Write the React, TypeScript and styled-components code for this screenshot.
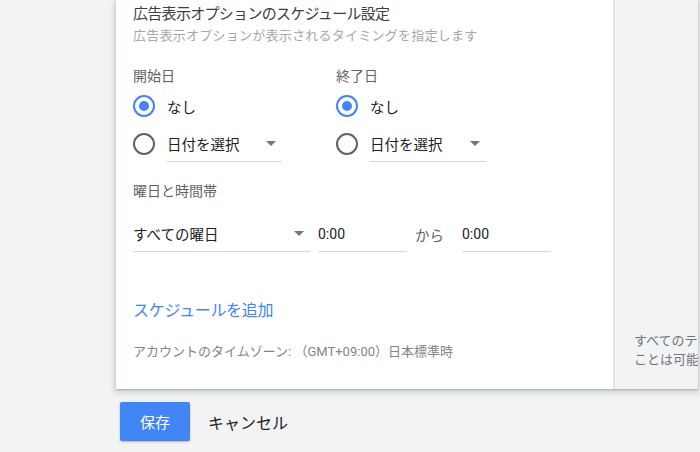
import { FC, JSX } from 'react';
import styled, { createGlobalStyle } from 'styled-components';

const GlobalStyle = createGlobalStyle`
  html, body {
    margin: 0;
    padding: 0;
    background: #f1f3f4;
    font-family: Roboto, "Noto Sans CJK JP", sans-serif;
    overflow: hidden;
  }
`;

const Page = styled.div`
  width: 700px;
  height: 452px;
  padding-left: 116px;
  box-sizing: border-box;
`;

const Card = styled.section`
  width: 582px;
  height: 389px;
  display: flex;
  background: #fff;
  box-shadow: 0 1px 2px rgba(60, 64, 67, 0.3), 0 2px 6px 2px rgba(60, 64, 67, 0.15);
`;

const Main = styled.div`
  width: 499px;
  padding: 4px 0 0 17px;
  box-sizing: border-box;
  display: flex;
  flex-direction: column;
  border-right: 2px solid #e3e4e6;
`;

const Side = styled.aside`
  flex: 1;
  min-width: 0;
  background: #f1f3f4;
  overflow: hidden;
  display: flex;
  flex-direction: column;
  justify-content: flex-end;
  padding: 0 0 20px 19px;
  font-size: 13px;
  line-height: 19px;
  color: #70757a;
  white-space: nowrap;
`;

const Title = styled.h2`
  margin: 0;
  font-size: 15px;
  font-weight: 400;
  line-height: 20px;
  letter-spacing: -0.7px;
  color: #3c4043;
`;

const Subtitle = styled.p`
  margin: 2px 0 0;
  font-size: 13px;
  line-height: 20px;
  letter-spacing: 0.25px;
  color: #a4a8ad;
`;

const DateRow = styled.div`
  display: grid;
  grid-template-columns: 203px 1fr;
  margin-top: 20px;
`;

const Column = styled.div`
  display: flex;
  flex-direction: column;
`;

const Label = styled.div<{ $top?: number }>`
  margin-top: ${p => p.$top ?? 0}px;
  font-size: 14px;
  line-height: 20px;
  color: #5f6368;
`;

const Options = styled.div`
  display: flex;
  flex-direction: column;
  gap: 2px;
  margin-top: 2px;
`;

const Option = styled.label`
  display: flex;
  align-items: center;
  height: 36px;
  gap: 12px;
  font-size: 14.5px;
  color: #202124;
`;

const Radio = styled.span<{ $checked?: boolean }>`
  width: 22px;
  height: 22px;
  flex: none;
  box-sizing: border-box;
  border-radius: 50%;
  border: 2px solid ${p => (p.$checked ? '#4285f4' : '#5f6368')};
  display: flex;
  align-items: center;
  justify-content: center;

  &::after {
    content: '';
    width: 10px;
    height: 10px;
    border-radius: 50%;
    background: #4285f4;
    display: ${p => (p.$checked ? 'block' : 'none')};
  }
`;

const Select = styled.div<{ $width: number }>`
  width: ${p => p.$width}px;
  height: 36px;
  box-sizing: border-box;
  display: flex;
  align-items: center;
  justify-content: space-between;
  padding-right: 6px;
  border-bottom: 1px solid #d8d9db;
  font-size: 14.5px;
  color: #202124;
`;

const Arrow = styled.span`
  width: 0;
  height: 0;
  border-left: 5px solid transparent;
  border-right: 5px solid transparent;
  border-top: 5px solid #757575;
`;

const TimeRow = styled.div`
  display: flex;
  align-items: center;
  margin-top: 15px;
`;

const TimeInput = styled.div`
  width: 89px;
  height: 35px;
  box-sizing: border-box;
  margin-left: 8px;
  display: flex;
  align-items: center;
  border-bottom: 1px solid #d8d9db;
  font-size: 14px;
  color: #202124;
`;

const Joiner = styled.span`
  margin: 0 10px 0 8px;
  font-size: 14.5px;
  color: #5f6368;
`;

const AddLink = styled.a`
  margin-top: 48px;
  font-size: 16px;
  line-height: 22px;
  letter-spacing: -0.3px;
  color: #4285f4;
  cursor: pointer;
`;

const Note = styled.p`
  margin: 20px 0 0;
  font-size: 13px;
  line-height: 20px;
  color: #80868b;
`;

const Actions = styled.div`
  display: flex;
  align-items: center;
  margin-top: 13px;
  padding-left: 4px;
`;

const SaveButton = styled.button`
  width: 70px;
  height: 39px;
  border: none;
  border-radius: 2px;
  background: #4285f4;
  color: #fff;
  font: inherit;
  font-size: 15px;
  box-shadow: 0 1px 2px rgba(0, 0, 0, 0.25);
`;

const CancelButton = styled.button`
  margin-left: 2px;
  padding: 0 16px;
  height: 39px;
  border: none;
  background: transparent;
  font: inherit;
  font-size: 16px;
  color: #202124;
`;

const DateColumn: FC<{ label: string; selectWidth: number }> = ({ label, selectWidth }): JSX.Element => (
  <Column>
    <Label>{label}</Label>
    <Options>
      <Option>
        <Radio $checked />
        なし
      </Option>
      <Option>
        <Radio />
        <Select $width={selectWidth}>
          日付を選択
          <Arrow />
        </Select>
      </Option>
    </Options>
  </Column>
);

const App: FC = (): JSX.Element => (
  <>
    <GlobalStyle />
    <Page>
      <Card>
        <Main>
          <Title>広告表示オプションのスケジュール設定</Title>
          <Subtitle>広告表示オプションが表示されるタイミングを指定します</Subtitle>
          <DateRow>
            <DateColumn label={'開始日'} selectWidth={115} />
            <DateColumn label={'終了日'} selectWidth={116} />
          </DateRow>
          <Label $top={19}>曜日と時間帯</Label>
          <TimeRow>
            <Select $width={177}>
              すべての曜日
              <Arrow />
            </Select>
            <TimeInput>0:00</TimeInput>
            <Joiner>から</Joiner>
            <TimeInput>0:00</TimeInput>
          </TimeRow>
          <AddLink>スケジュールを追加</AddLink>
          <Note>アカウントのタイムゾーン: （GMT+09:00）日本標準時</Note>
        </Main>
        <Side>
          <div>すべてのテキスト広告に</div>
          <div>ことは可能です</div>
        </Side>
      </Card>
      <Actions>
        <SaveButton>保存</SaveButton>
        <CancelButton>キャンセル</CancelButton>
      </Actions>
    </Page>
  </>
);

export default App;
